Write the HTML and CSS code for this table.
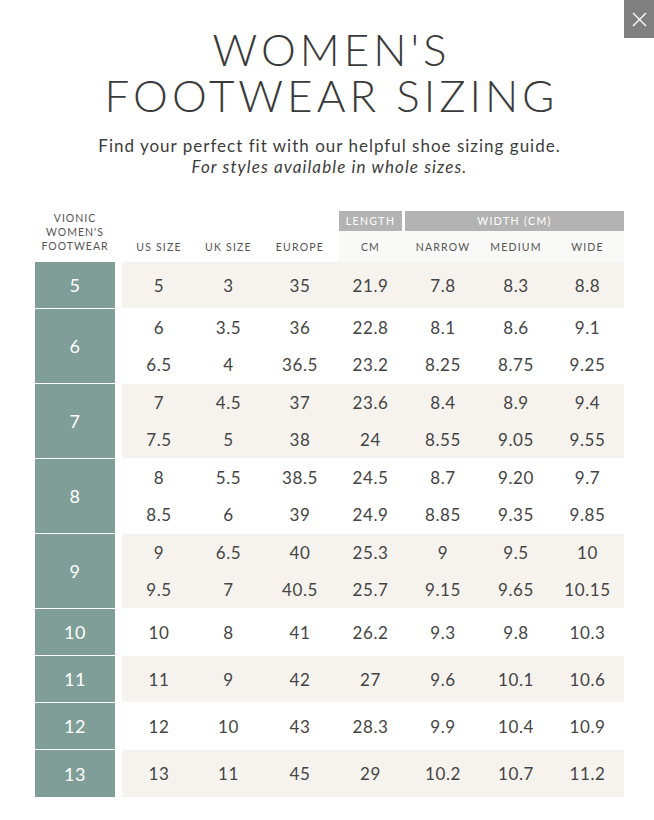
FILE: index.html
```html
<!DOCTYPE html>
<html>
<head>
<meta charset="utf-8">
<link rel="stylesheet" href="styles.css">
</head>
<body>
<div class="close" aria-label="Close">
  <svg width="15" height="15" viewBox="0 0 15 15"><path d="M1 1 L14 14 M14 1 L1 14" stroke="#fff" stroke-width="1.4" fill="none"/></svg>
</div>
<main class="page">
  <h1 class="title"><span class="t-line">WOMEN'S</span><span class="t-line">FOOTWEAR SIZING</span></h1>
  <p class="intro">Find your perfect fit with our helpful shoe sizing guide.<br><em>For styles available in whole sizes.</em></p>

  <div class="chart">
    <div class="head">
      <div class="h-brand">VIONIC<br>WOMEN'S<br>FOOTWEAR</div>
      <div class="h-top h-length">LENGTH</div>
      <div class="h-top h-width">WIDTH (CM)</div>
      <div class="h-col c1">US SIZE</div>
      <div class="h-col c2">UK SIZE</div>
      <div class="h-col c3">EUROPE</div>
      <div class="h-col c4 h-light">CM</div>
      <div class="h-light c5"></div>
      <div class="h-col c6 h-light">NARROW</div>
      <div class="h-col c7 h-light">MEDIUM</div>
      <div class="h-col c8 h-light">WIDE</div>
    </div>

    <div class="group shade">
      <div class="size">5</div>
      <div class="rows">
        <div class="row one"><span>5</span><span>3</span><span>35</span><span>21.9</span><i></i><span>7.8</span><span>8.3</span><span>8.8</span></div>
      </div>
    </div>
    <div class="group">
      <div class="size">6</div>
      <div class="rows">
        <div class="row"><span>6</span><span>3.5</span><span>36</span><span>22.8</span><i></i><span>8.1</span><span>8.6</span><span>9.1</span></div>
        <div class="row"><span>6.5</span><span>4</span><span>36.5</span><span>23.2</span><i></i><span>8.25</span><span>8.75</span><span>9.25</span></div>
      </div>
    </div>
    <div class="group shade">
      <div class="size">7</div>
      <div class="rows">
        <div class="row"><span>7</span><span>4.5</span><span>37</span><span>23.6</span><i></i><span>8.4</span><span>8.9</span><span>9.4</span></div>
        <div class="row"><span>7.5</span><span>5</span><span>38</span><span>24</span><i></i><span>8.55</span><span>9.05</span><span>9.55</span></div>
      </div>
    </div>
    <div class="group">
      <div class="size">8</div>
      <div class="rows">
        <div class="row"><span>8</span><span>5.5</span><span>38.5</span><span>24.5</span><i></i><span>8.7</span><span>9.20</span><span>9.7</span></div>
        <div class="row"><span>8.5</span><span>6</span><span>39</span><span>24.9</span><i></i><span>8.85</span><span>9.35</span><span>9.85</span></div>
      </div>
    </div>
    <div class="group shade">
      <div class="size">9</div>
      <div class="rows">
        <div class="row"><span>9</span><span>6.5</span><span>40</span><span>25.3</span><i></i><span>9</span><span>9.5</span><span>10</span></div>
        <div class="row"><span>9.5</span><span>7</span><span>40.5</span><span>25.7</span><i></i><span>9.15</span><span>9.65</span><span>10.15</span></div>
      </div>
    </div>
    <div class="group">
      <div class="size">10</div>
      <div class="rows">
        <div class="row one"><span>10</span><span>8</span><span>41</span><span>26.2</span><i></i><span>9.3</span><span>9.8</span><span>10.3</span></div>
      </div>
    </div>
    <div class="group shade">
      <div class="size">11</div>
      <div class="rows">
        <div class="row one"><span>11</span><span>9</span><span>42</span><span>27</span><i></i><span>9.6</span><span>10.1</span><span>10.6</span></div>
      </div>
    </div>
    <div class="group">
      <div class="size">12</div>
      <div class="rows">
        <div class="row one"><span>12</span><span>10</span><span>43</span><span>28.3</span><i></i><span>9.9</span><span>10.4</span><span>10.9</span></div>
      </div>
    </div>
    <div class="group shade">
      <div class="size">13</div>
      <div class="rows">
        <div class="row one last"><span>13</span><span>11</span><span>45</span><span>29</span><i></i><span>10.2</span><span>10.7</span><span>11.2</span></div>
      </div>
    </div>
  </div>
</main>
</body>
</html>
```
FILE: styles.css
```css
* { box-sizing: border-box; }
html, body { margin: 0; padding: 0; background: #fff; }
body {
  font-family: Lato, "Open Sans", sans-serif;
  color: #444;
  width: 654px;
  height: 820px;
  overflow: hidden;
  position: relative;
}
.close {
  position: absolute;
  top: 0;
  right: 0;
  width: 30px;
  height: 38px;
  background: #808080;
  display: flex;
  align-items: center;
  justify-content: center;
}
.page {
  padding: 26px 30px 0 35px;
}
.title {
  margin: 0;
  text-align: center;
  font-family: Lato, sans-serif;
  font-weight: 300;
  font-size: 44px;
  line-height: 46px;
  letter-spacing: 4px;
  color: #3a3a3a;
  padding-left: 4px;
}
.t-line {
  display: block;
  height: 46px;
}
.intro {
  margin: 17px 0 0;
  text-align: center;
  font-size: 17px;
  line-height: 21px;
  letter-spacing: 1px;
  color: #3c3c3c;
}
.intro em { font-style: italic; letter-spacing: 1.1px; }

.chart {
  margin-top: 34px;
  width: 589px;
}
.head {
  display: grid;
  grid-template-columns: 80px 7px 74px 65px 78px 63px 3px 76px 70px 73px;
  grid-template-rows: 20px 31px;
}
.h-brand {
  grid-column: 1;
  grid-row: 1 / 3;
  align-self: end;
  padding-bottom: 9px;
  text-align: center;
  font-size: 10.5px;
  line-height: 14px;
  letter-spacing: 1px;
  color: #555;
}
.h-top {
  grid-row: 1;
  background: #b3b3b3;
  color: #fff;
  font-size: 10.5px;
  letter-spacing: 1.4px;
  display: flex;
  align-items: center;
  justify-content: center;
}
.h-length { grid-column: 6; }
.h-width { grid-column: 8 / 11; }
.h-col {
  grid-row: 2;
  font-size: 10.5px;
  letter-spacing: 1.2px;
  color: #555;
  display: flex;
  align-items: center;
  justify-content: center;
}
.h-light { grid-row: 2; background: #f9f9f7; }
.c1 { grid-column: 3; }
.c2 { grid-column: 4; }
.c3 { grid-column: 5; }
.c4 { grid-column: 6; }
.c5 { grid-column: 7; }
.c6 { grid-column: 8; }
.c7 { grid-column: 9; }
.c8 { grid-column: 10; }

.group {
  display: flex;
  gap: 7px;
  margin-bottom: 1px;
}
.size {
  width: 80px;
  flex: none;
  background: #7f9e97;
  color: #fff;
  font-size: 18px;
  display: flex;
  align-items: center;
  justify-content: center;
  letter-spacing: 0.5px;
}
.rows { flex: 1; }
.shade .rows { background: #f6f3ee; }
.row {
  display: grid;
  grid-template-columns: 74px 65px 78px 63px 3px 76px 70px 73px;
  height: 37px;
  align-items: center;
  font-size: 17px;
  letter-spacing: 0.6px;
  color: #444;
}
.row.one { height: 46px; }
.row.last { height: 47px; }
.row span { text-align: center; }
```
